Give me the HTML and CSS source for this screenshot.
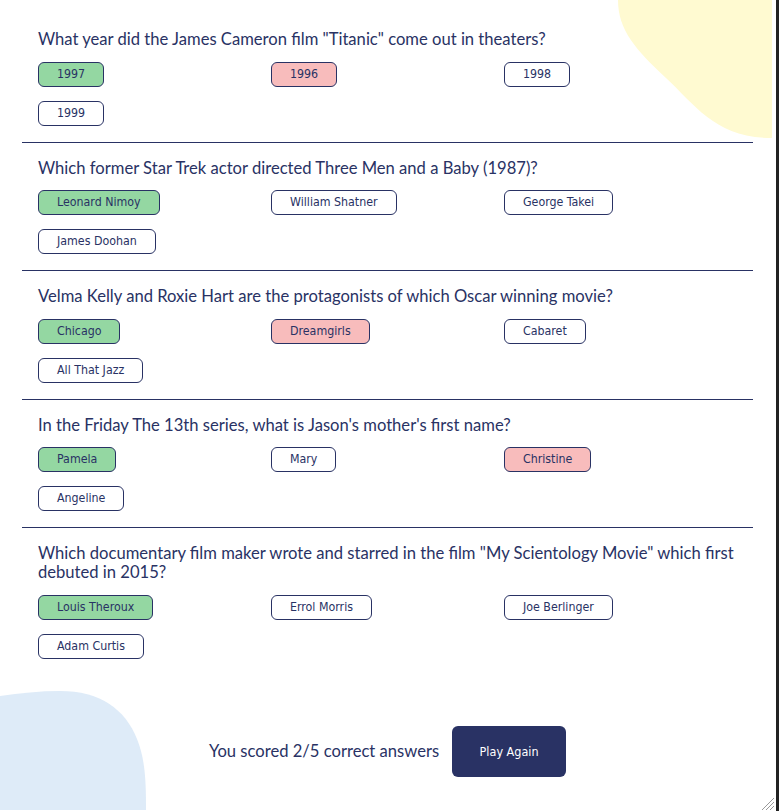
FILE: index.html
```html
<!DOCTYPE html>
<html lang="en">
<head>
<meta charset="utf-8">
<title>Quizzical</title>
<link rel="stylesheet" href="styles.css">
</head>
<body>
<div class="page">
  <svg class="blob blob-yellow" width="160" height="140" viewBox="620 0 160 140" aria-hidden="true">
    <path d="M622 0 C622 30 640 50 670 78 C700 106 720 138 776 138 L776 0 Z" fill="#FFFAD1"/>
  </svg>
  <svg class="blob blob-blue" width="150" height="122" viewBox="0 690 150 122" aria-hidden="true">
    <path d="M0 697 C20 694 40 692 60 692 C100 692 125 710 137 740 C145 760 146 780 146 811 L0 811 Z" fill="#DEEBF8"/>
  </svg>

  <main class="quiz">
    <section class="question">
      <p class="question-text">What year did the James Cameron film "Titanic" come out in theaters?</p>
      <div class="answers">
        <button class="answer correct">1997</button>
        <button class="answer wrong">1996</button>
        <button class="answer">1998</button>
        <button class="answer">1999</button>
      </div>
    </section>

    <section class="question">
      <p class="question-text">Which former Star Trek actor directed Three Men and a Baby (1987)?</p>
      <div class="answers">
        <button class="answer correct">Leonard Nimoy</button>
        <button class="answer">William Shatner</button>
        <button class="answer">George Takei</button>
        <button class="answer">James Doohan</button>
      </div>
    </section>

    <section class="question">
      <p class="question-text">Velma Kelly and Roxie Hart are the protagonists of which Oscar winning movie?</p>
      <div class="answers">
        <button class="answer correct">Chicago</button>
        <button class="answer wrong">Dreamgirls</button>
        <button class="answer">Cabaret</button>
        <button class="answer">All That Jazz</button>
      </div>
    </section>

    <section class="question">
      <p class="question-text">In the Friday The 13th series, what is Jason's mother's first name?</p>
      <div class="answers">
        <button class="answer correct">Pamela</button>
        <button class="answer">Mary</button>
        <button class="answer wrong">Christine</button>
        <button class="answer">Angeline</button>
      </div>
    </section>

    <section class="question last">
      <p class="question-text">Which documentary film maker wrote and starred in the film "My Scientology Movie" which first debuted in 2015?</p>
      <div class="answers">
        <button class="answer correct">Louis Theroux</button>
        <button class="answer">Errol Morris</button>
        <button class="answer">Joe Berlinger</button>
        <button class="answer">Adam Curtis</button>
      </div>
    </section>

    <div class="result">
      <p class="score">You scored 2/5 correct answers</p>
      <button class="play-again">Play Again</button>
    </div>
  </main>

  <svg class="resize-handle" width="14" height="14" viewBox="0 0 14 14" aria-hidden="true">
    <g stroke="#9a9a9a" stroke-width="1">
      <line x1="13" y1="1" x2="1" y2="13"/>
      <line x1="13" y1="5" x2="5" y2="13"/>
      <line x1="13" y1="9" x2="9" y2="13"/>
    </g>
  </svg>
</div>
</body>
</html>
```

FILE: styles.css
```css
* {
  box-sizing: border-box;
}

html, body {
  margin: 0;
  padding: 0;
  background: #ffffff;
}

.page {
  position: relative;
  width: 779px;
  height: 811px;
  overflow: hidden;
  border-right: 3px solid #222222;
  background: #ffffff;
}

.blob {
  position: absolute;
  z-index: 0;
}

.blob-yellow {
  top: 0;
  right: 0;
}

.blob-blue {
  left: 0;
  bottom: 0;
}

.quiz {
  position: relative;
  z-index: 1;
  padding: 14px 23px 0 22px;
  font-family: Lato, "Open Sans", sans-serif;
  color: #293264;
}

.question {
  padding: 16px 16px 16px;
  border-bottom: 1px solid #293264;
}

.question.last {
  border-bottom: none;
}

.question-text {
  margin: 0 0 12.5px;
  font-size: 16.6px;
  line-height: 19px;
  color: #293264;
}

.answers {
  display: grid;
  grid-template-columns: repeat(3, 1fr);
  row-gap: 14px;
  justify-items: start;
}

.answer {
  font-family: "DejaVu Sans Condensed", "DejaVu Sans", sans-serif;
  font-stretch: condensed;
  font-size: 12.3px;
  line-height: 15px;
  height: 25px;
  padding: 4px 18px;
  color: #293264;
  background: #ffffff;
  border: 1px solid #293264;
  border-radius: 6px;
  cursor: pointer;
}

.answer.correct {
  background: #94D7A2;
}

.answer.wrong {
  background: #F8BCBC;
}

.result {
  display: flex;
  justify-content: center;
  align-items: center;
  gap: 13px;
  margin-top: 51px;
}

.score {
  margin: 0;
  font-size: 16.6px;
  line-height: 19px;
  color: #293264;
}

.play-again {
  font-family: "DejaVu Sans Condensed", "DejaVu Sans", sans-serif;
  font-stretch: condensed;
  font-size: 12.5px;
  line-height: 15px;
  width: 114px;
  height: 51px;
  padding: 0;
  color: #ffffff;
  background: #293264;
  border: none;
  border-radius: 6px;
  cursor: pointer;
}

.resize-handle {
  position: absolute;
  right: 1px;
  bottom: 0;
}
```
